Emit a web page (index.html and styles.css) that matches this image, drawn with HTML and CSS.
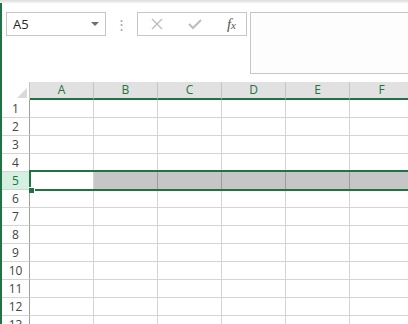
FILE: index.html
```html
<!DOCTYPE html>
<html lang="en">
<head>
    <meta charset="UTF-8">
    <title>Sheet</title>
    <link rel="stylesheet" href="styles.css">
</head>
<body>
    <div class="app">
        <div class="topstrip"></div>
        <div class="main">
            <div class="formula-row">
                <div class="namebox">
                    <span>A5</span>
                    <span class="arrow"></span>
                </div>
                <div class="dots">&#8942;</div>
                <div class="buttons">
                    <svg width="14" height="14" viewBox="0 0 14 14"><path d="M2 2 L12 12 M12 2 L2 12" stroke="#bdbdbd" stroke-width="1.4" fill="none"/></svg>
                    <svg width="16" height="14" viewBox="0 0 16 14"><path d="M2 7 L6 11 L14 3" stroke="#bdbdbd" stroke-width="2" fill="none"/></svg>
                    <span class="fx">f<sub>x</sub></span>
                </div>
                <div class="formula-input"></div>
            </div>

            <div class="grid">
                <div class="corner"><span class="tri"></span></div>
                <div class="colhead">A</div>
                <div class="colhead">B</div>
                <div class="colhead">C</div>
                <div class="colhead">D</div>
                <div class="colhead">E</div>
                <div class="colhead">F</div>

                <div class="rowhead">1</div><div class="cell"></div><div class="cell"></div><div class="cell"></div><div class="cell"></div><div class="cell"></div><div class="cell"></div>
                <div class="rowhead">2</div><div class="cell"></div><div class="cell"></div><div class="cell"></div><div class="cell"></div><div class="cell"></div><div class="cell"></div>
                <div class="rowhead">3</div><div class="cell"></div><div class="cell"></div><div class="cell"></div><div class="cell"></div><div class="cell"></div><div class="cell"></div>
                <div class="rowhead">4</div><div class="cell"></div><div class="cell"></div><div class="cell"></div><div class="cell"></div><div class="cell"></div><div class="cell"></div>
                <div class="rowhead active">5</div><div class="cell"></div><div class="cell sel"></div><div class="cell sel"></div><div class="cell sel"></div><div class="cell sel"></div><div class="cell sel"></div>
                <div class="rowhead">6</div><div class="cell"></div><div class="cell"></div><div class="cell"></div><div class="cell"></div><div class="cell"></div><div class="cell"></div>
                <div class="rowhead">7</div><div class="cell"></div><div class="cell"></div><div class="cell"></div><div class="cell"></div><div class="cell"></div><div class="cell"></div>
                <div class="rowhead">8</div><div class="cell"></div><div class="cell"></div><div class="cell"></div><div class="cell"></div><div class="cell"></div><div class="cell"></div>
                <div class="rowhead">9</div><div class="cell"></div><div class="cell"></div><div class="cell"></div><div class="cell"></div><div class="cell"></div><div class="cell"></div>
                <div class="rowhead">10</div><div class="cell"></div><div class="cell"></div><div class="cell"></div><div class="cell"></div><div class="cell"></div><div class="cell"></div>
                <div class="rowhead">11</div><div class="cell"></div><div class="cell"></div><div class="cell"></div><div class="cell"></div><div class="cell"></div><div class="cell"></div>
                <div class="rowhead">12</div><div class="cell"></div><div class="cell"></div><div class="cell"></div><div class="cell"></div><div class="cell"></div><div class="cell"></div>
                <div class="rowhead">13</div><div class="cell"></div><div class="cell"></div><div class="cell"></div><div class="cell"></div><div class="cell"></div><div class="cell"></div>

                <!-- selection of row 5 -->
                <div class="selection"><span class="handle"></span></div>
            </div>
        </div>
    </div>
</body>
</html>
```

FILE: styles.css
```css
body {
    margin: 0;
    padding: 0;
    background: #fff;
    font-family: "Open Sans", "Noto Sans", Arial, sans-serif;
    overflow: hidden;
}

.app {
    width: 408px;
    height: 324px;
    overflow: hidden;
}

.topstrip {
    height: 3px;
    background: linear-gradient(#dcdcdc, #f4f4f4);
}

.main {
    height: 321px;
    border-left: 2px solid #217346;
    overflow: hidden;
}

.formula-row {
    display: flex;
    align-items: flex-start;
    height: 79px;
    padding-top: 9px;
    box-sizing: border-box;
}

.namebox {
    display: flex;
    align-items: center;
    justify-content: space-between;
    width: 100px;
    height: 24px;
    margin-left: 4px;
    padding: 0 6px 0 6px;
    box-sizing: border-box;
    border: 1px solid #c6c6c6;
    font-size: 13px;
    color: #262626;
}

.arrow {
    width: 0;
    height: 0;
    border-left: 4px solid transparent;
    border-right: 4px solid transparent;
    border-top: 4px solid #6e6e6e;
}

.dots {
    width: 31px;
    text-align: center;
    font-size: 13px;
    line-height: 24px;
    color: #a0a0a0;
}

.buttons {
    display: flex;
    align-items: center;
    justify-content: space-between;
    width: 110px;
    height: 24px;
    padding: 0 10px 0 12px;
    box-sizing: border-box;
    border: 1px solid #c6c6c6;
}

.fx {
    font-family: "Liberation Serif", serif;
    font-style: italic;
    font-size: 15px;
    color: #555;
}

.fx sub {
    font-size: 11px;
    vertical-align: 0;
}

.formula-input {
    flex: 1;
    height: 60px;
    margin-left: 3px;
    border: 1px solid #c6c6c6;
    border-right: none;
    background: #fdfdfd;
}

.grid {
    position: relative;
    display: grid;
    grid-template-columns: 28px repeat(6, 64px);
    grid-auto-rows: 18px;
    font-size: 12px;
}

.grid > div {
    box-sizing: border-box;
}

.corner {
    position: relative;
    border-right: 1px solid #c6c6c6;
}

.tri {
    position: absolute;
    right: 2px;
    bottom: 2px;
    width: 0;
    height: 0;
    border-left: 10px solid transparent;
    border-bottom: 10px solid #dadada;
}

.colhead {
    background: #e1e1e1;
    border-right: 1px solid #c4c4c4;
    border-bottom: 2px solid #217346;
    color: #217346;
    text-align: center;
    line-height: 16px;
}

.rowhead {
    border-right: 1px solid #9e9e9e;
    border-bottom: 1px solid #d4d4d4;
    color: #444;
    text-align: center;
    line-height: 17px;
}

.rowhead.active {
    background: #d3f0e0;
    color: #217346;
}

.cell {
    border-right: 1px solid #d4d4d4;
    border-bottom: 1px solid #d4d4d4;
}

.cell.sel {
    background: #c6c6c6;
    border-right-color: #9c9c9c;
}

.selection {
    position: absolute;
    left: 27px;
    top: 88px;
    width: 400px;
    height: 21px;
    border: 2px solid #217346;
    border-right: none;
    box-sizing: border-box;
    pointer-events: none;
}

.handle {
    position: absolute;
    left: -2px;
    bottom: -4px;
    width: 5px;
    height: 5px;
    background: #217346;
    border: 1px solid #fff;
    border-left: none;
    border-bottom: none;
}
```
